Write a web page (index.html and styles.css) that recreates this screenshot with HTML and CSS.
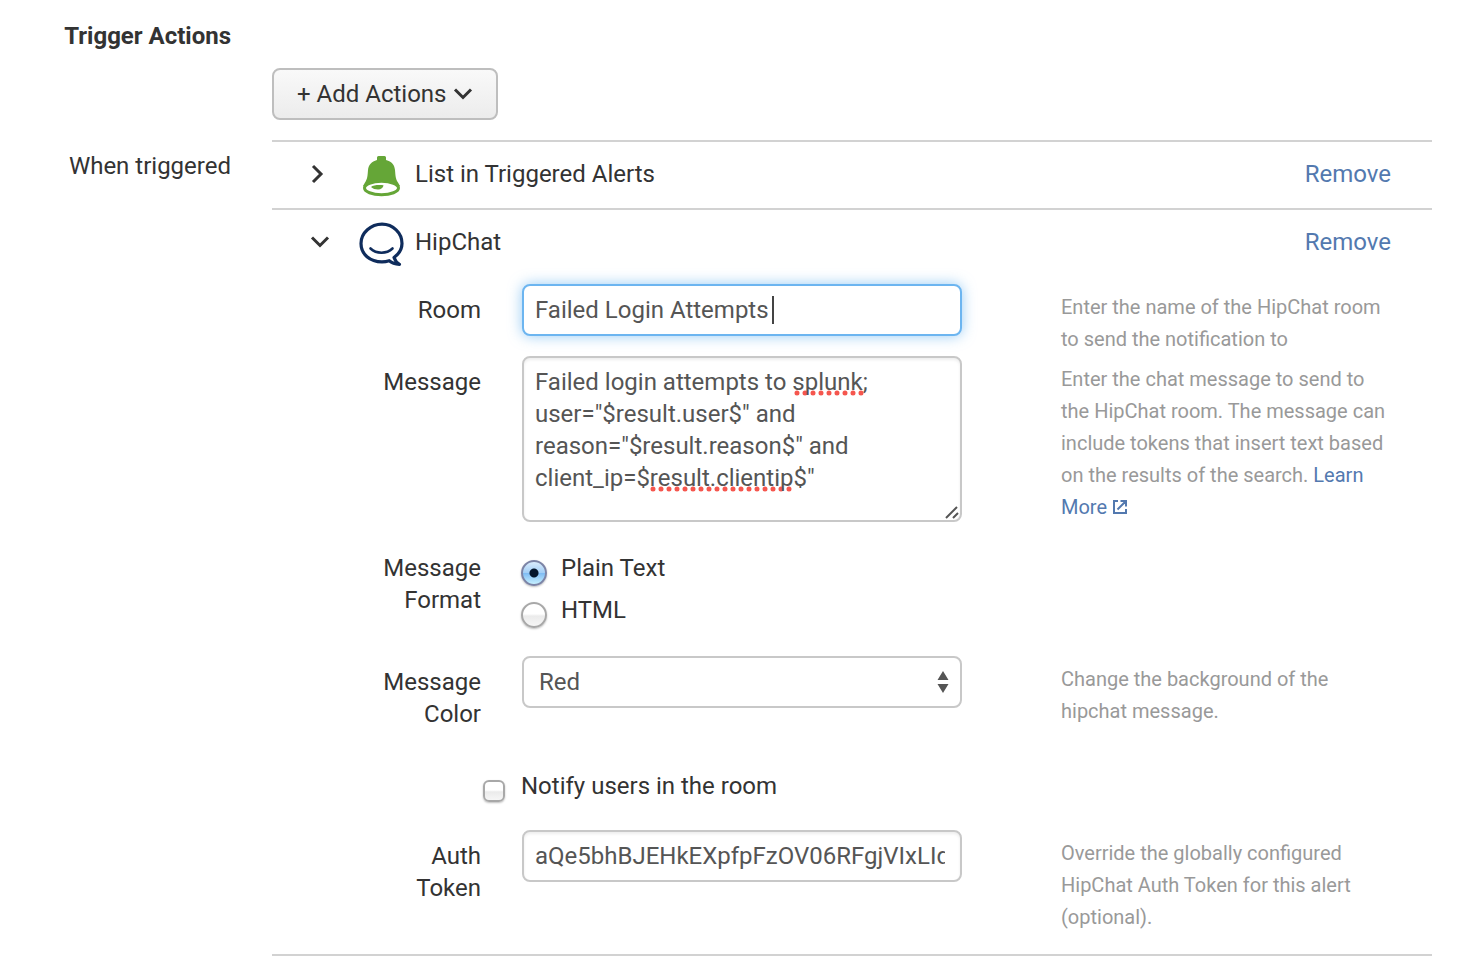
FILE: index.html
```html
<!DOCTYPE html>
<html lang="en">
<head>
<meta charset="utf-8">
<title>Trigger Actions</title>
<link rel="stylesheet" href="styles.css">
</head>
<body>
<main class="page">
  <h2 class="section-title">Trigger Actions</h2>

  <div class="toolbar">
    <button class="add-button" type="button">+ Add Actions
      <svg class="chevron-down" viewBox="0 0 20 14" aria-hidden="true"><path d="M2 2.500l8 8 8-8"/></svg>
    </button>
  </div>

  <div class="side-label">When triggered</div>

  <div class="actions">
    <section class="action">
      <header class="action-header">
        <button class="toggle" type="button" aria-label="Expand List in Triggered Alerts">
          <svg class="chevron-right" viewBox="0 0 14 20" aria-hidden="true"><path d="M3 2l8 8-8 8"/></svg>
        </button>
        <svg class="action-icon" viewBox="0 -2 48 48" aria-hidden="true">
          <path fill="#65a637" d="M20 5.500Q20 4 21.500 4h6Q29 4 29 5.500V8c6 1.500 8.500 5 9 10 .5 6 .6 9 3 12.500L43 34l-18 4L6 34l2-3.500c2.500-3.500 2.600-7 3-12.500.5-5 3.500-8.500 9-10z"/>
          <ellipse cx="24.500" cy="36" rx="17" ry="6.700" fill="#fff" stroke="#65a637" stroke-width="3"/>
          <path fill="#65a637" d="M14 35c2-2 8-2.300 12.500-1.700-.2 2.700-2.500 4.200-5.500 4.200-2.500 0-5.500-.8-7-2.500z"/>
        </svg>
        <h3 class="action-name">List in Triggered Alerts</h3>
        <a class="link" href="#">Remove</a>
      </header>
    </section>

    <section class="action">
      <header class="action-header">
        <button class="toggle" type="button" aria-label="Collapse HipChat">
          <svg class="chevron-down" viewBox="0 0 20 14" aria-hidden="true"><path d="M2 2.500l8 8 8-8"/></svg>
        </button>
        <svg class="action-icon" viewBox="0 -2 48 48" aria-hidden="true">
          <g fill="none" stroke="#0f2c5c" stroke-linecap="round" stroke-linejoin="round">
            <path stroke-width="3.200" d="M37 37.500c4.900-3.500 8-8.300 8-14C45 12.700 36 4.200 25 4.200S4 12.700 4 23.500s9 18.300 21 18.300c2.700 0 5-.4 7.200-1.100 2.600 2.200 6.300 3.300 10.300 3.600-2.800-1.600-4.500-4-5.500-6.800z"/>
            <path stroke-width="2.600" d="M13.500 28.500c6 5.600 16 5.600 22 0"/>
          </g>
        </svg>
        <h3 class="action-name">HipChat</h3>
        <a class="link" href="#">Remove</a>
      </header>

      <form class="fields">
        <div class="field">
          <label class="field-label" for="room">Room</label>
          <div class="control">
            <input class="box text-box is-focused" id="room" type="text" value="Failed Login Attempts">
            <span class="caret"></span>
          </div>
          <p class="help">Enter the name of the HipChat room to send the notification to</p>
        </div>

        <div class="field field-message">
          <label class="field-label" for="message">Message</label>
          <div class="control">
            <textarea class="box message-box" id="message" spellcheck="false">Failed login attempts to splunk; user="$result.user$" and reason="$result.reason$" and client_ip=$result.clientip$"</textarea>
            <svg class="grip" viewBox="0 0 16 16" aria-hidden="true"><path d="M2 14L13 3M9 14l5-5"/></svg>
          </div>
          <p class="help">Enter the chat message to send to the HipChat room. The message can include tokens that insert text based on the results of the search. <a class="link" href="#">Learn More <svg class="external" viewBox="0 0 16 16" aria-hidden="true"><path d="M6 2H2v12h12v-4M5.500 10.500L13 3M8.500 2H14v5.500"/></svg></a></p>
        </div>

        <div class="field field-spaced" role="radiogroup" aria-labelledby="format-label">
          <span class="field-label" id="format-label">Message Format</span>
          <div class="control radios">
            <label class="choice"><input class="radio" type="radio" name="format" checked>Plain Text</label>
            <label class="choice"><input class="radio" type="radio" name="format">HTML</label>
          </div>
        </div>

        <div class="field field-spaced">
          <label class="field-label" for="color">Message Color</label>
          <div class="control">
            <select class="box select-box" id="color"><option>Red</option><option>Green</option><option>Yellow</option></select>
            <svg class="select-arrows" viewBox="0 0 12 22" aria-hidden="true"><path d="M6 0l5.500 9H.5zM6 22l5.500-9H.5z"/></svg>
          </div>
          <p class="help">Change the background of the hipchat message.</p>
        </div>

        <div class="notify">
          <label class="choice choice-check"><input class="checkbox" type="checkbox">Notify users in the room</label>
        </div>

        <div class="field">
          <label class="field-label" for="token">Auth Token</label>
          <div class="control">
            <input class="box text-box" id="token" type="text" value="aQe5bhBJEHkEXpfpFzOV06RFgjVIxLIdQm3">
          </div>
          <p class="help">Override the globally configured HipChat Auth Token for this alert (optional).</p>
        </div>
      </form>
    </section>
  </div>
</main>
</body>
</html>
```

FILE: styles.css
```css
* { box-sizing: border-box; }

body {
  margin: 0;
  background: #fff;
  color: #333;
  font: 24px/32px Roboto, "Liberation Sans", sans-serif;
}

h2, h3, p { margin: 0; }
button, input, textarea, select { font: inherit; }

.page {
  display: grid;
  grid-template-columns: 231px minmax(0, 1fr);
  column-gap: 41px;
  padding: 20px 38px 0 0;
}

.section-title {
  font-size: 24px;
  font-weight: 700;
  line-height: 32px;
  text-align: right;
}

.toolbar {
  grid-row: 2;
  grid-column: 2;
  padding: 16px 0 20px;
}

.add-button {
  display: flex;
  align-items: center;
  gap: 7px;
  height: 52px;
  padding: 0 23px;
  border: 2px solid #bebebe;
  border-radius: 8px;
  background: linear-gradient(#f9f9f9, #ececec);
  color: #333;
}

.chevron-down, .chevron-right {
  fill: none;
  stroke: #333;
  stroke-width: 3;
}
.chevron-down { width: 20px; height: 14px; }
.chevron-right { width: 14px; height: 20px; }

.side-label {
  grid-row: 3;
  grid-column: 1;
  padding-top: 10px;
  text-align: right;
}

.actions {
  grid-row: 3;
  grid-column: 2;
  border-bottom: 2px solid #d2d2d2;
}
.action { border-top: 2px solid #d2d2d2; }

.action-header {
  display: flex;
  align-items: center;
  height: 66px;
  padding: 0 41px 2px 38px;
}

.toggle {
  display: flex;
  width: 47px;
  padding: 0;
  border: 0;
  background: none;
}

.action-icon {
  width: 48px;
  height: 48px;
}

.action-name {
  flex: 1;
  padding-left: 10px;
  font-size: 24px;
  font-weight: 400;
  line-height: 32px;
}

.link {
  color: #5379af;
  text-decoration: none;
}

.fields { padding: 8px 32px 20px 0; }

.field {
  display: grid;
  grid-template-columns: 209px minmax(0, 440fr) minmax(0, 397fr);
  column-gap: 41px;
  align-items: start;
}
.field-message { margin-bottom: 18px; }
.field-spaced { margin-bottom: 30px; }

.field-label {
  padding: 10px 0 0 99px;
  text-align: right;
}

.control { position: relative; }

.box {
  display: block;
  width: 100%;
  height: 52px;
  border: 2px solid #c8c8c8;
  border-radius: 8px;
  outline: 0;
  background-color: #fff;
  color: #555;
}

.text-box {
  padding: 0 15px 0 11px;
  box-shadow: inset 0 2px 3px rgba(0, 0, 0, .07);
}

.is-focused {
  border-color: #6cb5f0;
  box-shadow: 0 0 14px rgba(82, 168, 236, .6);
}

.caret {
  position: absolute;
  top: 12px;
  left: 250px;
  width: 2px;
  height: 28px;
  background: #444;
}

/* The two dotted layers are the spelling marks under "splunk" and "result.clientip". */
.message-box {
  height: 166px;
  padding: 8px 11px;
  resize: none;
  overflow: hidden;
  line-height: 32px;
  box-shadow: inset 0 2px 3px rgba(0, 0, 0, .07);
  background-repeat: no-repeat;
  background-image:
    url("data:image/svg+xml,%3Csvg xmlns='http://www.w3.org/2000/svg' width='72' height='6'%3E%3Cpath d='M3 3H70' stroke='%23f5564e' stroke-width='5' stroke-linecap='round' stroke-dasharray='0 8'/%3E%3C/svg%3E"),
    url("data:image/svg+xml,%3Csvg xmlns='http://www.w3.org/2000/svg' width='144' height='6'%3E%3Cpath d='M3 3H142' stroke='%23f5564e' stroke-width='5' stroke-linecap='round' stroke-dasharray='0 8'/%3E%3C/svg%3E");
  background-position: 270px 32px, 126px 128px;
}

.grip {
  position: absolute;
  right: 2px;
  bottom: 2px;
  width: 16px;
  height: 16px;
  fill: none;
  stroke: #555;
  stroke-width: 2;
}

.select-box {
  padding: 0 15px;
  appearance: none;
}

.select-arrows {
  position: absolute;
  top: 15px;
  right: 13px;
  width: 12px;
  height: 22px;
  fill: #555;
  pointer-events: none;
}

.help {
  padding: 7px 6px 1px 58px;
  color: #999;
  font-size: 20px;
}

.external {
  width: 16px;
  height: 16px;
  vertical-align: -1px;
  fill: none;
  stroke: #5379af;
  stroke-width: 2;
}

.radios {
  display: flex;
  flex-direction: column;
  gap: 10px;
  padding-top: 10px;
}

.choice {
  display: flex;
  gap: 14px;
}

.radio, .checkbox {
  flex: none;
  margin: 8px 0 0;
  border: 2px solid #a8a8a8;
  appearance: none;
  background: linear-gradient(#fff 45%, #ebebeb 55%, #f6f6f6);
  box-shadow: 0 1px 2px rgba(0, 0, 0, .25);
}

.radio {
  width: 26px;
  height: 26px;
  margin-left: -1px;
  margin-bottom: -2px;
  border-radius: 50%;
}

.radio:checked {
  border-color: #7c84a6;
  background:
    radial-gradient(circle, #03152b 4px, transparent 5px),
    linear-gradient(#d4e9fb 5%, #a3cff6 48%, #80bdf4 52%, #c6f0ff);
}

.notify { padding: 10px 0 28px 211px; }
.choice-check { gap: 16px; }

.checkbox {
  width: 22px;
  height: 22px;
  margin-top: 10px;
  border-radius: 6px;
}
```
